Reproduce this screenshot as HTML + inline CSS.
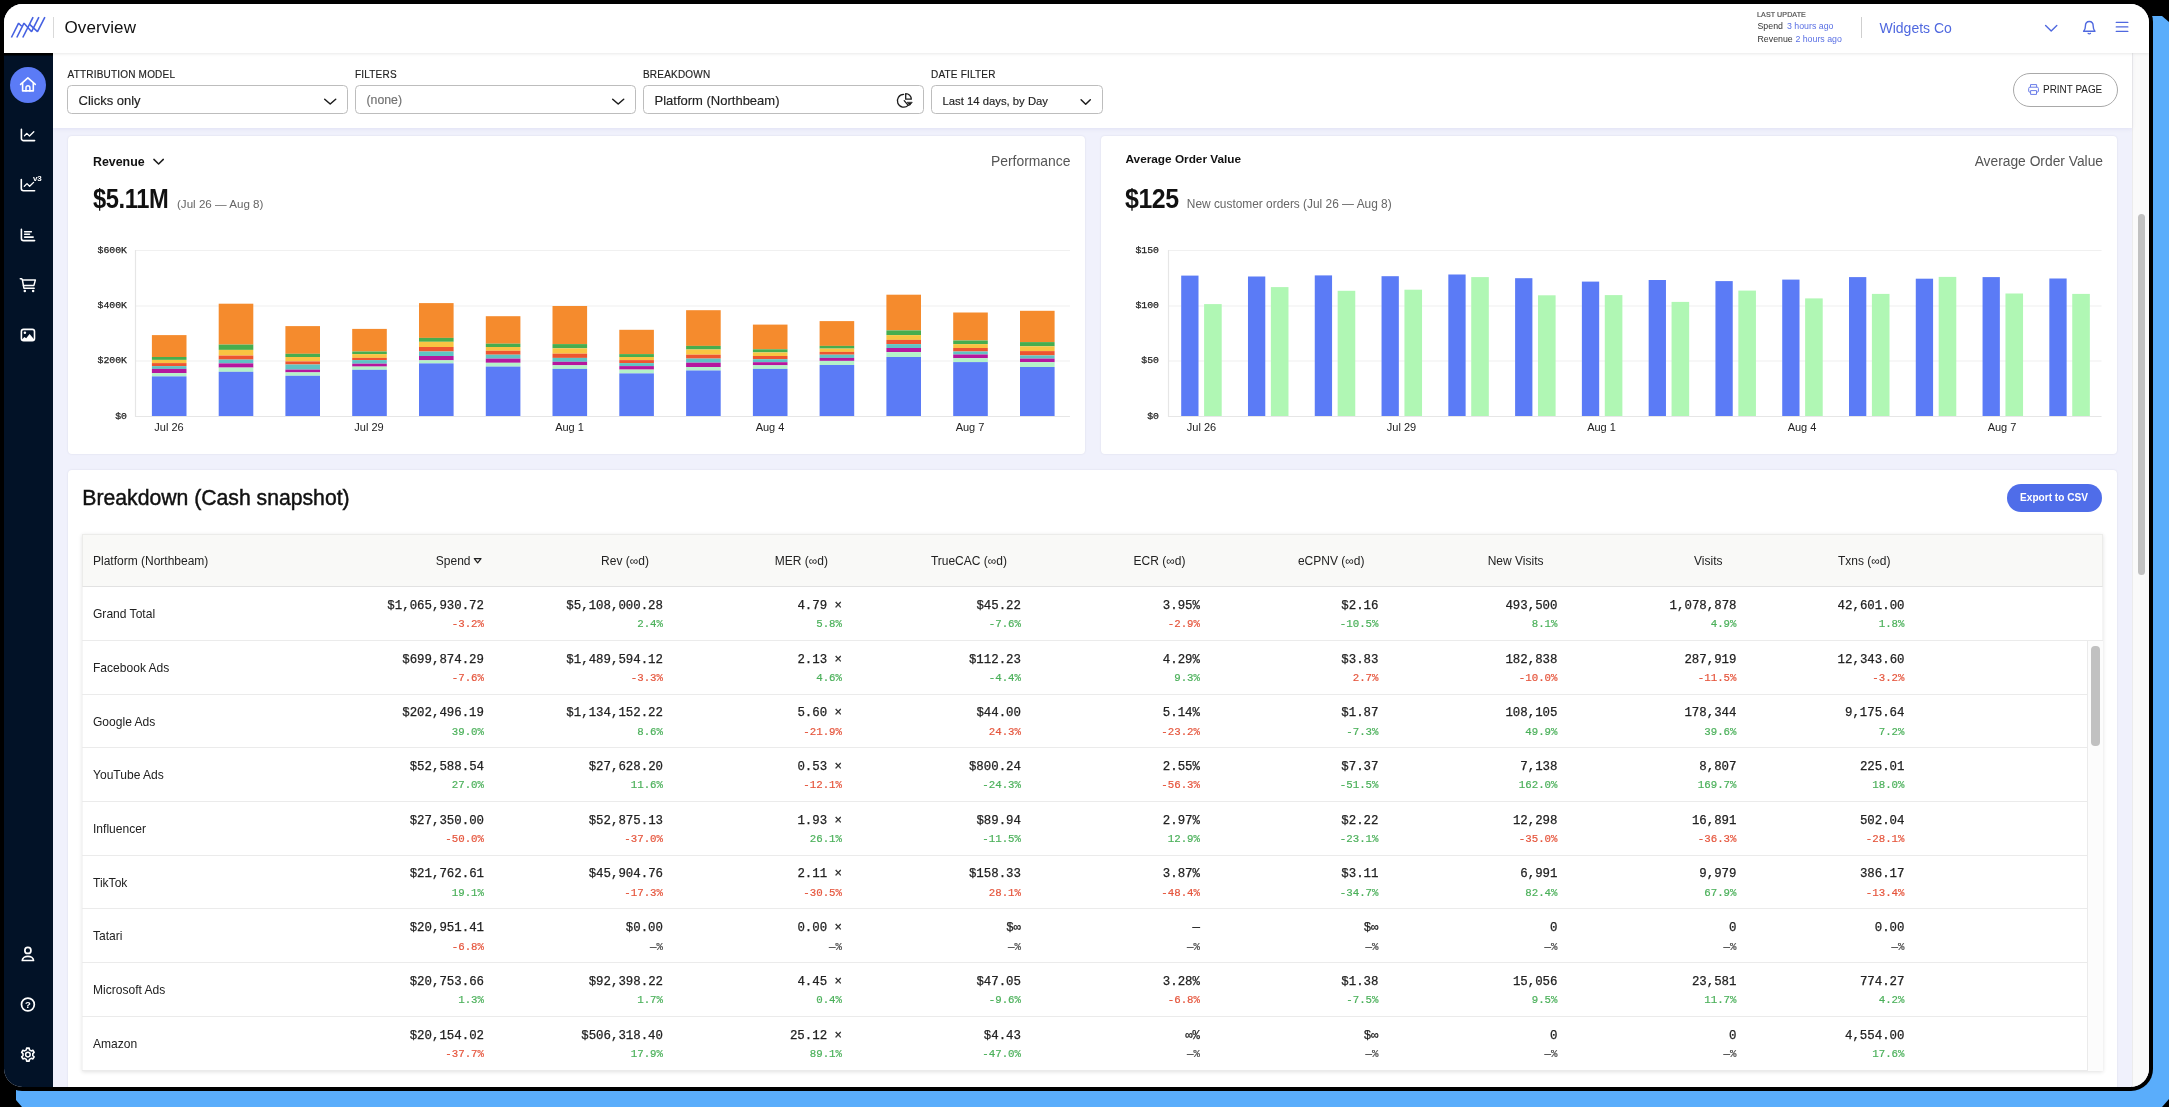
<!DOCTYPE html>
<html>
<head>
<meta charset="utf-8">
<title>Overview</title>
<style>
*{box-sizing:border-box;margin:0;padding:0}
html,body{width:2169px;height:1107px;overflow:hidden;background:#000}
body{font-family:"Liberation Sans",sans-serif;color:#1d1d1f;position:relative}
.abs{position:absolute}
.blue{position:absolute;left:16px;top:16px;width:2153px;height:1091px;background:#5aadfb;clip-path:polygon(0 0,2146px 0,2153px 6px,2153px 1083px,2146px 1091px,6px 1091px,0 1084px)}
.frame{position:absolute;left:0;top:0;width:2152.6px;height:1090.8px;background:#000;border-radius:22px}
.app{position:absolute;left:4px;top:4px;width:2145px;height:1083px;border-radius:18.5px;overflow:hidden;background:#f0f1fc}
.pg{position:absolute;left:-4px;top:-4px;width:2169px;height:1107px;will-change:transform}
.hdr{position:absolute;left:4px;top:4px;width:2145px;height:49px;background:#fff;box-shadow:0 1px 3px rgba(0,0,0,.09);z-index:5}
.side{position:absolute;left:4px;top:53px;width:49px;height:1034px;background:linear-gradient(#000 0,#000 1.5px,#021227 3.5px);z-index:4}
.fbar{position:absolute;left:53px;top:53px;width:2079px;height:75.3px;background:#fff;box-shadow:0 1px 4px rgba(90,90,170,.10)}
.strack{position:absolute;left:2132px;top:53px;width:17px;height:1034px;background:#fafafa;border-left:1px solid #ececec}
.sthumb{position:absolute;left:2137.5px;top:214px;width:7.5px;height:361px;background:#c1c1c1;border-radius:4px}
.card{position:absolute;background:#fff;border-radius:4px;box-shadow:0 0 2px rgba(60,60,90,.12)}
.lbl{position:absolute;top:69.4px;font-size:10px;letter-spacing:.2px;color:#222;-webkit-text-stroke:.15px #222;white-space:nowrap}
.sel{position:absolute;top:85px;height:28.5px;border:1px solid #bdbdbd;border-radius:4.5px;background:#fff;font-size:13px;line-height:29.6px;-webkit-text-stroke:.15px currentColor;padding-left:10.5px;white-space:nowrap;color:#222}
.hr{z-index:7;line-height:10px;white-space:nowrap}
.mono{font-family:"Liberation Mono",monospace}
.ax{position:absolute;font-family:"Liberation Mono",monospace;font-size:9.8px;color:#222;-webkit-text-stroke:.25px #222;text-align:right;width:60px;line-height:12px}
.xl{position:absolute;font-size:11px;color:#222;line-height:14px;top:420px;white-space:nowrap;transform:translateX(-50%)}
.thead{position:absolute;left:82px;top:534px;width:2021px;height:53.3px;background:#f9f9f7;border:1px solid #ececea;border-bottom:1px solid #e2e2e2}
.th{position:absolute;top:553.5px;font-size:12px;line-height:14px;color:#222;white-space:nowrap}
.row{position:absolute;left:0;width:2169px;height:53.69px}

.ln{position:absolute;left:82px;height:1.4px;background:#ebebeb}
.rl{position:absolute;left:93px;top:20px;font-size:12.05px;line-height:14px;color:#222;white-space:nowrap}
.v{position:absolute;top:11.7px;-webkit-text-stroke:.25px #222;font-family:"Liberation Mono",monospace;font-size:12.4px;line-height:14px;color:#222;white-space:nowrap}
.p{position:absolute;top:31.1px;-webkit-text-stroke:.2px currentColor;font-family:"Liberation Mono",monospace;font-size:10.75px;line-height:12px;white-space:nowrap}
.g{color:#4bb05a}.r{color:#e5553c}.n{color:#444}
</style>
</head>
<body>
<div class="blue"></div>
<div class="frame"></div>
<div class="app"><div class="pg">

<!-- scroll track -->
<div class="strack"></div><div class="sthumb"></div>

<!-- filter bar -->
<div class="fbar"></div>
<div class="lbl" style="left:67.5px">ATTRIBUTION MODEL</div>
<div class="lbl" style="left:355px">FILTERS</div>
<div class="lbl" style="left:643px">BREAKDOWN</div>
<div class="lbl" style="left:931px">DATE FILTER</div>
<div class="sel" style="left:67px;width:281px">Clicks only</div>
<div class="sel" style="left:355px;width:281px;color:#717171;font-size:12.3px">(none)</div>
<div class="sel" style="left:643px;width:281px">Platform (Northbeam)</div>
<div class="sel" style="left:931px;width:172px;font-size:11.3px;line-height:30.6px">Last 14 days, by Day</div>

<!-- cards -->
<div class="card" style="left:68px;top:135.5px;width:1016.7px;height:318px"></div>
<div class="card" style="left:1100.5px;top:135.5px;width:1016.5px;height:318px"></div>
<div class="card" style="left:68px;top:470px;width:2049px;height:640px"></div>

<!-- left card text -->
<div class="abs" style="left:93px;top:154.6px;font-size:12.4px;font-weight:bold;line-height:14px;color:#111">Revenue</div>
<div class="abs" style="left:93px;top:184.1px;font-size:28px;font-weight:bold;line-height:30px;color:#111;letter-spacing:-.5px;transform:scaleX(.847);transform-origin:0 0">$5.11M</div>
<div class="abs" style="left:177px;top:197.3px;font-size:11.6px;line-height:14px;color:#666;white-space:nowrap">(Jul 26 — Aug 8)</div>
<div class="abs" style="right:1098.5px;top:153.5px;font-size:13.9px;line-height:15px;color:#555">Performance</div>

<!-- right card text -->
<div class="abs" style="left:1125.5px;top:151.6px;font-size:11.8px;font-weight:bold;line-height:14px;color:#111;white-space:nowrap">Average Order Value</div>
<div class="abs" style="left:1125px;top:184.1px;font-size:28px;font-weight:bold;line-height:30px;color:#111;letter-spacing:-.5px;transform:scaleX(.89);transform-origin:0 0">$125</div>
<div class="abs" style="left:1186.8px;top:197.3px;font-size:11.9px;line-height:14px;color:#666;white-space:nowrap">New customer orders (Jul 26 — Aug 8)</div>
<div class="abs" style="right:66px;top:153.5px;font-size:13.8px;line-height:15px;color:#555">Average Order Value</div>

<!-- axis labels left -->
<div class="ax" style="left:67px;top:245px">$600K</div>
<div class="ax" style="left:67px;top:300px">$400K</div>
<div class="ax" style="left:67px;top:355px">$200K</div>
<div class="ax" style="left:67px;top:411px">$0</div>
<div class="ax" style="left:1099px;top:245px">$150</div>
<div class="ax" style="left:1099px;top:300px">$100</div>
<div class="ax" style="left:1099px;top:355px">$50</div>
<div class="ax" style="left:1099px;top:411px">$0</div>

<div class="xl" style="left:169px">Jul 26</div>
<div class="xl" style="left:369px">Jul 29</div>
<div class="xl" style="left:569.5px">Aug 1</div>
<div class="xl" style="left:770px">Aug 4</div>
<div class="xl" style="left:970px">Aug 7</div>
<div class="xl" style="left:1201.5px">Jul 26</div>
<div class="xl" style="left:1401.5px">Jul 29</div>
<div class="xl" style="left:1601.5px">Aug 1</div>
<div class="xl" style="left:1802px">Aug 4</div>
<div class="xl" style="left:2002px">Aug 7</div>

<!-- charts -->
<svg class="abs" style="left:0;top:0" width="2169" height="1107" viewBox="0 0 2169 1107" shape-rendering="auto">
<g stroke="#f0f0f0" stroke-width="1.2" fill="none">
<path d="M135.5 250.5H1070 M135.5 306H1070 M135.5 361H1070"/>
<path d="M1168.5 250.5H2101.5 M1168.5 306H2101.5 M1168.5 361H2101.5"/>
</g>
<g stroke="#e6e6e6" stroke-width="1.2" fill="none">
<path d="M135.5 250V416.5H1070"/>
<path d="M1168.5 250V416.5H2101.5"/>
</g>
<rect x="151.9" y="335.1" width="34.6" height="21.9" fill="#f58b2d"/>
<rect x="151.9" y="357" width="34.6" height="2.9" fill="#47ad4e"/>
<rect x="151.9" y="359.9" width="34.6" height="3.2" fill="#f9c442"/>
<rect x="151.9" y="363.1" width="34.6" height="3" fill="#ed5530"/>
<rect x="151.9" y="366.1" width="34.6" height="2.8" fill="#5fc3c4"/>
<rect x="151.9" y="368.9" width="34.6" height="4.3" fill="#b5179e"/>
<rect x="151.9" y="373.2" width="34.6" height="3.2" fill="#b4f2c8"/>
<rect x="151.9" y="376.4" width="34.6" height="39.6" fill="#5b7bf6"/>
<rect x="218.7" y="303.7" width="34.6" height="40.9" fill="#f58b2d"/>
<rect x="218.7" y="344.6" width="34.6" height="5.3" fill="#47ad4e"/>
<rect x="218.7" y="349.9" width="34.6" height="5.7" fill="#f9c442"/>
<rect x="218.7" y="355.6" width="34.6" height="4" fill="#ed5530"/>
<rect x="218.7" y="359.6" width="34.6" height="3.8" fill="#5fc3c4"/>
<rect x="218.7" y="363.4" width="34.6" height="4.2" fill="#b5179e"/>
<rect x="218.7" y="367.6" width="34.6" height="4.2" fill="#b4f2c8"/>
<rect x="218.7" y="371.8" width="34.6" height="44.2" fill="#5b7bf6"/>
<rect x="285.4" y="326.1" width="34.6" height="27.7" fill="#f58b2d"/>
<rect x="285.4" y="353.8" width="34.6" height="3.2" fill="#47ad4e"/>
<rect x="285.4" y="357" width="34.6" height="4.4" fill="#f9c442"/>
<rect x="285.4" y="361.4" width="34.6" height="3.1" fill="#ed5530"/>
<rect x="285.4" y="364.5" width="34.6" height="5.1" fill="#5fc3c4"/>
<rect x="285.4" y="369.6" width="34.6" height="2.8" fill="#b5179e"/>
<rect x="285.4" y="372.4" width="34.6" height="3.4" fill="#b4f2c8"/>
<rect x="285.4" y="375.8" width="34.6" height="40.2" fill="#5b7bf6"/>
<rect x="352.2" y="328.9" width="34.6" height="22.6" fill="#f58b2d"/>
<rect x="352.2" y="351.5" width="34.6" height="2.6" fill="#47ad4e"/>
<rect x="352.2" y="354.1" width="34.6" height="3.8" fill="#f9c442"/>
<rect x="352.2" y="357.9" width="34.6" height="2.2" fill="#ed5530"/>
<rect x="352.2" y="360.1" width="34.6" height="3.6" fill="#5fc3c4"/>
<rect x="352.2" y="363.7" width="34.6" height="2.9" fill="#b5179e"/>
<rect x="352.2" y="366.6" width="34.6" height="3.2" fill="#b4f2c8"/>
<rect x="352.2" y="369.8" width="34.6" height="46.2" fill="#5b7bf6"/>
<rect x="419" y="303.1" width="34.6" height="34.8" fill="#f58b2d"/>
<rect x="419" y="337.9" width="34.6" height="3.9" fill="#47ad4e"/>
<rect x="419" y="341.8" width="34.6" height="5.2" fill="#f9c442"/>
<rect x="419" y="347" width="34.6" height="4.5" fill="#ed5530"/>
<rect x="419" y="351.5" width="34.6" height="4.5" fill="#5fc3c4"/>
<rect x="419" y="356" width="34.6" height="4.3" fill="#b5179e"/>
<rect x="419" y="360.3" width="34.6" height="3.1" fill="#b4f2c8"/>
<rect x="419" y="363.4" width="34.6" height="52.6" fill="#5b7bf6"/>
<rect x="485.8" y="316.2" width="34.6" height="27.5" fill="#f58b2d"/>
<rect x="485.8" y="343.7" width="34.6" height="3.3" fill="#47ad4e"/>
<rect x="485.8" y="347" width="34.6" height="3.8" fill="#f9c442"/>
<rect x="485.8" y="350.8" width="34.6" height="3.9" fill="#ed5530"/>
<rect x="485.8" y="354.7" width="34.6" height="3.9" fill="#5fc3c4"/>
<rect x="485.8" y="358.6" width="34.6" height="4.2" fill="#b5179e"/>
<rect x="485.8" y="362.8" width="34.6" height="3.8" fill="#b4f2c8"/>
<rect x="485.8" y="366.6" width="34.6" height="49.4" fill="#5b7bf6"/>
<rect x="552.5" y="306" width="34.6" height="38.1" fill="#f58b2d"/>
<rect x="552.5" y="344.1" width="34.6" height="4.2" fill="#47ad4e"/>
<rect x="552.5" y="348.3" width="34.6" height="5.4" fill="#f9c442"/>
<rect x="552.5" y="353.7" width="34.6" height="4.2" fill="#ed5530"/>
<rect x="552.5" y="357.9" width="34.6" height="3.9" fill="#5fc3c4"/>
<rect x="552.5" y="361.8" width="34.6" height="3.5" fill="#b5179e"/>
<rect x="552.5" y="365.3" width="34.6" height="3.6" fill="#b4f2c8"/>
<rect x="552.5" y="368.9" width="34.6" height="47.1" fill="#5b7bf6"/>
<rect x="619.3" y="329.8" width="34.6" height="24.3" fill="#f58b2d"/>
<rect x="619.3" y="354.1" width="34.6" height="2.9" fill="#47ad4e"/>
<rect x="619.3" y="357" width="34.6" height="3.1" fill="#f9c442"/>
<rect x="619.3" y="360.1" width="34.6" height="3" fill="#ed5530"/>
<rect x="619.3" y="363.1" width="34.6" height="3" fill="#5fc3c4"/>
<rect x="619.3" y="366.1" width="34.6" height="3.5" fill="#b5179e"/>
<rect x="619.3" y="369.6" width="34.6" height="3.8" fill="#b4f2c8"/>
<rect x="619.3" y="373.4" width="34.6" height="42.6" fill="#5b7bf6"/>
<rect x="686.1" y="310.2" width="34.6" height="35.7" fill="#f58b2d"/>
<rect x="686.1" y="345.9" width="34.6" height="3.6" fill="#47ad4e"/>
<rect x="686.1" y="349.5" width="34.6" height="5.2" fill="#f9c442"/>
<rect x="686.1" y="354.7" width="34.6" height="3.9" fill="#ed5530"/>
<rect x="686.1" y="358.6" width="34.6" height="4.1" fill="#5fc3c4"/>
<rect x="686.1" y="362.7" width="34.6" height="4.3" fill="#b5179e"/>
<rect x="686.1" y="367" width="34.6" height="3.5" fill="#b4f2c8"/>
<rect x="686.1" y="370.5" width="34.6" height="45.5" fill="#5b7bf6"/>
<rect x="752.9" y="324.6" width="34.6" height="24.7" fill="#f58b2d"/>
<rect x="752.9" y="349.3" width="34.6" height="3.1" fill="#47ad4e"/>
<rect x="752.9" y="352.4" width="34.6" height="3.6" fill="#f9c442"/>
<rect x="752.9" y="356" width="34.6" height="3.2" fill="#ed5530"/>
<rect x="752.9" y="359.2" width="34.6" height="3" fill="#5fc3c4"/>
<rect x="752.9" y="362.2" width="34.6" height="3.1" fill="#b5179e"/>
<rect x="752.9" y="365.3" width="34.6" height="3.6" fill="#b4f2c8"/>
<rect x="752.9" y="368.9" width="34.6" height="47.1" fill="#5b7bf6"/>
<rect x="819.6" y="321.1" width="34.6" height="24.8" fill="#f58b2d"/>
<rect x="819.6" y="345.9" width="34.6" height="2.7" fill="#47ad4e"/>
<rect x="819.6" y="348.6" width="34.6" height="3.3" fill="#f9c442"/>
<rect x="819.6" y="351.9" width="34.6" height="2.8" fill="#ed5530"/>
<rect x="819.6" y="354.7" width="34.6" height="3.2" fill="#5fc3c4"/>
<rect x="819.6" y="357.9" width="34.6" height="3" fill="#b5179e"/>
<rect x="819.6" y="360.9" width="34.6" height="4.1" fill="#b4f2c8"/>
<rect x="819.6" y="365" width="34.6" height="51" fill="#5b7bf6"/>
<rect x="886.4" y="294.7" width="34.6" height="35.7" fill="#f58b2d"/>
<rect x="886.4" y="330.4" width="34.6" height="4.7" fill="#47ad4e"/>
<rect x="886.4" y="335.1" width="34.6" height="4.8" fill="#f9c442"/>
<rect x="886.4" y="339.9" width="34.6" height="4.2" fill="#ed5530"/>
<rect x="886.4" y="344.1" width="34.6" height="3.9" fill="#5fc3c4"/>
<rect x="886.4" y="348" width="34.6" height="4.1" fill="#b5179e"/>
<rect x="886.4" y="352.1" width="34.6" height="4.9" fill="#b4f2c8"/>
<rect x="886.4" y="357" width="34.6" height="59" fill="#5b7bf6"/>
<rect x="953.2" y="312.5" width="34.6" height="28" fill="#f58b2d"/>
<rect x="953.2" y="340.5" width="34.6" height="3.6" fill="#47ad4e"/>
<rect x="953.2" y="344.1" width="34.6" height="3.9" fill="#f9c442"/>
<rect x="953.2" y="348" width="34.6" height="3.5" fill="#ed5530"/>
<rect x="953.2" y="351.5" width="34.6" height="3" fill="#5fc3c4"/>
<rect x="953.2" y="354.5" width="34.6" height="3.7" fill="#b5179e"/>
<rect x="953.2" y="358.2" width="34.6" height="3.9" fill="#b4f2c8"/>
<rect x="953.2" y="362.1" width="34.6" height="53.9" fill="#5b7bf6"/>
<rect x="1020" y="310.8" width="34.6" height="31.3" fill="#f58b2d"/>
<rect x="1020" y="342.1" width="34.6" height="4.2" fill="#47ad4e"/>
<rect x="1020" y="346.3" width="34.6" height="4.8" fill="#f9c442"/>
<rect x="1020" y="351.1" width="34.6" height="4.3" fill="#ed5530"/>
<rect x="1020" y="355.4" width="34.6" height="3.2" fill="#5fc3c4"/>
<rect x="1020" y="358.6" width="34.6" height="3.6" fill="#b5179e"/>
<rect x="1020" y="362.2" width="34.6" height="4.8" fill="#b4f2c8"/>
<rect x="1020" y="367" width="34.6" height="49" fill="#5b7bf6"/>
<rect x="1181.2" y="275.6" width="17.3" height="140.4" fill="#5b7bf6"/>
<rect x="1204.1" y="304.1" width="17.6" height="111.9" fill="#b0f7b4"/>
<rect x="1247.98" y="276.5" width="17.3" height="139.5" fill="#5b7bf6"/>
<rect x="1270.88" y="287.1" width="17.6" height="128.9" fill="#b0f7b4"/>
<rect x="1314.76" y="275.4" width="17.3" height="140.6" fill="#5b7bf6"/>
<rect x="1337.66" y="290.8" width="17.6" height="125.2" fill="#b0f7b4"/>
<rect x="1381.54" y="276.2" width="17.3" height="139.8" fill="#5b7bf6"/>
<rect x="1404.44" y="289.7" width="17.6" height="126.3" fill="#b0f7b4"/>
<rect x="1448.32" y="274.5" width="17.3" height="141.5" fill="#5b7bf6"/>
<rect x="1471.22" y="277.1" width="17.6" height="138.9" fill="#b0f7b4"/>
<rect x="1515.1" y="278.2" width="17.3" height="137.8" fill="#5b7bf6"/>
<rect x="1538" y="295.3" width="17.6" height="120.7" fill="#b0f7b4"/>
<rect x="1581.88" y="281.6" width="17.3" height="134.4" fill="#5b7bf6"/>
<rect x="1604.78" y="295.1" width="17.6" height="120.9" fill="#b0f7b4"/>
<rect x="1648.66" y="280" width="17.3" height="136" fill="#5b7bf6"/>
<rect x="1671.56" y="301.9" width="17.6" height="114.1" fill="#b0f7b4"/>
<rect x="1715.44" y="281.1" width="17.3" height="134.9" fill="#5b7bf6"/>
<rect x="1738.34" y="290.6" width="17.6" height="125.4" fill="#b0f7b4"/>
<rect x="1782.22" y="279.6" width="17.3" height="136.4" fill="#5b7bf6"/>
<rect x="1805.12" y="298.4" width="17.6" height="117.6" fill="#b0f7b4"/>
<rect x="1849" y="277.1" width="17.3" height="138.9" fill="#5b7bf6"/>
<rect x="1871.9" y="293.9" width="17.6" height="122.1" fill="#b0f7b4"/>
<rect x="1915.78" y="278.7" width="17.3" height="137.3" fill="#5b7bf6"/>
<rect x="1938.68" y="276.9" width="17.6" height="139.1" fill="#b0f7b4"/>
<rect x="1982.56" y="277.1" width="17.3" height="138.9" fill="#5b7bf6"/>
<rect x="2005.46" y="293.5" width="17.6" height="122.5" fill="#b0f7b4"/>
<rect x="2049.34" y="278.5" width="17.3" height="137.5" fill="#5b7bf6"/>
<rect x="2072.24" y="293.9" width="17.6" height="122.1" fill="#b0f7b4"/>
</svg>

<!-- breakdown -->
<div class="abs" style="left:82.3px;top:484.6px;font-size:21.2px;line-height:26px;color:#111;white-space:nowrap;-webkit-text-stroke:.45px #111">Breakdown (Cash snapshot)</div>
<div class="abs" style="left:2006.5px;top:484px;width:95px;height:28px;border-radius:14px;background:#4f6de9;color:#fff;font-size:10.1px;font-weight:bold;line-height:28px;text-align:center">Export to CSV</div>

<div class="abs" style="left:82px;top:534px;width:2021px;height:537px;border:1px solid #f5f5f5;box-shadow:0 1px 4px rgba(0,0,0,.12)"></div>
<div class="thead"></div>
<div class="th" style="left:93px">Platform (Northbeam)</div>
<div class="th" style="right:1698.5px">Spend</div>
<div class="th" style="right:1520px">Rev (∞d)</div>
<div class="th" style="right:1341px">MER (∞d)</div>
<div class="th" style="right:1162px">TrueCAC (∞d)</div>
<div class="th" style="right:983.5px">ECR (∞d)</div>
<div class="th" style="right:804.5px">eCPNV (∞d)</div>
<div class="th" style="right:625.5px">New Visits</div>
<div class="th" style="right:446.5px">Visits</div>
<div class="th" style="right:278.5px">Txns (∞d)</div>
<div class="row" style="top:587.3px">
<div class="rl">Grand Total</div>
<div class="v" style="right:1685px">$1,065,930.72</div><div class="p r" style="right:1685px">-3.2%</div>
<div class="v" style="right:1506px">$5,108,000.28</div><div class="p g" style="right:1506px">2.4%</div>
<div class="v" style="right:1327px">4.79 ×</div><div class="p g" style="right:1327px">5.8%</div>
<div class="v" style="right:1148px">$45.22</div><div class="p g" style="right:1148px">-7.6%</div>
<div class="v" style="right:969px">3.95%</div><div class="p r" style="right:969px">-2.9%</div>
<div class="v" style="right:790.5px">$2.16</div><div class="p g" style="right:790.5px">-10.5%</div>
<div class="v" style="right:611.5px">493,500</div><div class="p g" style="right:611.5px">8.1%</div>
<div class="v" style="right:432.5px">1,078,878</div><div class="p g" style="right:432.5px">4.9%</div>
<div class="v" style="right:264.5px">42,601.00</div><div class="p g" style="right:264.5px">1.8%</div>
</div>
<div class="row" style="top:640.99px">
<div class="rl">Facebook Ads</div>
<div class="v" style="right:1685px">$699,874.29</div><div class="p r" style="right:1685px">-7.6%</div>
<div class="v" style="right:1506px">$1,489,594.12</div><div class="p r" style="right:1506px">-3.3%</div>
<div class="v" style="right:1327px">2.13 ×</div><div class="p g" style="right:1327px">4.6%</div>
<div class="v" style="right:1148px">$112.23</div><div class="p g" style="right:1148px">-4.4%</div>
<div class="v" style="right:969px">4.29%</div><div class="p g" style="right:969px">9.3%</div>
<div class="v" style="right:790.5px">$3.83</div><div class="p r" style="right:790.5px">2.7%</div>
<div class="v" style="right:611.5px">182,838</div><div class="p r" style="right:611.5px">-10.0%</div>
<div class="v" style="right:432.5px">287,919</div><div class="p r" style="right:432.5px">-11.5%</div>
<div class="v" style="right:264.5px">12,343.60</div><div class="p r" style="right:264.5px">-3.2%</div>
</div>
<div class="row" style="top:694.68px">
<div class="rl">Google Ads</div>
<div class="v" style="right:1685px">$202,496.19</div><div class="p g" style="right:1685px">39.0%</div>
<div class="v" style="right:1506px">$1,134,152.22</div><div class="p g" style="right:1506px">8.6%</div>
<div class="v" style="right:1327px">5.60 ×</div><div class="p r" style="right:1327px">-21.9%</div>
<div class="v" style="right:1148px">$44.00</div><div class="p r" style="right:1148px">24.3%</div>
<div class="v" style="right:969px">5.14%</div><div class="p r" style="right:969px">-23.2%</div>
<div class="v" style="right:790.5px">$1.87</div><div class="p g" style="right:790.5px">-7.3%</div>
<div class="v" style="right:611.5px">108,105</div><div class="p g" style="right:611.5px">49.9%</div>
<div class="v" style="right:432.5px">178,344</div><div class="p g" style="right:432.5px">39.6%</div>
<div class="v" style="right:264.5px">9,175.64</div><div class="p g" style="right:264.5px">7.2%</div>
</div>
<div class="row" style="top:748.37px">
<div class="rl">YouTube Ads</div>
<div class="v" style="right:1685px">$52,588.54</div><div class="p g" style="right:1685px">27.0%</div>
<div class="v" style="right:1506px">$27,628.20</div><div class="p g" style="right:1506px">11.6%</div>
<div class="v" style="right:1327px">0.53 ×</div><div class="p r" style="right:1327px">-12.1%</div>
<div class="v" style="right:1148px">$800.24</div><div class="p g" style="right:1148px">-24.3%</div>
<div class="v" style="right:969px">2.55%</div><div class="p r" style="right:969px">-56.3%</div>
<div class="v" style="right:790.5px">$7.37</div><div class="p g" style="right:790.5px">-51.5%</div>
<div class="v" style="right:611.5px">7,138</div><div class="p g" style="right:611.5px">162.0%</div>
<div class="v" style="right:432.5px">8,807</div><div class="p g" style="right:432.5px">169.7%</div>
<div class="v" style="right:264.5px">225.01</div><div class="p g" style="right:264.5px">18.0%</div>
</div>
<div class="row" style="top:802.06px">
<div class="rl">Influencer</div>
<div class="v" style="right:1685px">$27,350.00</div><div class="p r" style="right:1685px">-50.0%</div>
<div class="v" style="right:1506px">$52,875.13</div><div class="p r" style="right:1506px">-37.0%</div>
<div class="v" style="right:1327px">1.93 ×</div><div class="p g" style="right:1327px">26.1%</div>
<div class="v" style="right:1148px">$89.94</div><div class="p g" style="right:1148px">-11.5%</div>
<div class="v" style="right:969px">2.97%</div><div class="p g" style="right:969px">12.9%</div>
<div class="v" style="right:790.5px">$2.22</div><div class="p g" style="right:790.5px">-23.1%</div>
<div class="v" style="right:611.5px">12,298</div><div class="p r" style="right:611.5px">-35.0%</div>
<div class="v" style="right:432.5px">16,891</div><div class="p r" style="right:432.5px">-36.3%</div>
<div class="v" style="right:264.5px">502.04</div><div class="p r" style="right:264.5px">-28.1%</div>
</div>
<div class="row" style="top:855.75px">
<div class="rl">TikTok</div>
<div class="v" style="right:1685px">$21,762.61</div><div class="p g" style="right:1685px">19.1%</div>
<div class="v" style="right:1506px">$45,904.76</div><div class="p r" style="right:1506px">-17.3%</div>
<div class="v" style="right:1327px">2.11 ×</div><div class="p r" style="right:1327px">-30.5%</div>
<div class="v" style="right:1148px">$158.33</div><div class="p r" style="right:1148px">28.1%</div>
<div class="v" style="right:969px">3.87%</div><div class="p r" style="right:969px">-48.4%</div>
<div class="v" style="right:790.5px">$3.11</div><div class="p g" style="right:790.5px">-34.7%</div>
<div class="v" style="right:611.5px">6,991</div><div class="p g" style="right:611.5px">82.4%</div>
<div class="v" style="right:432.5px">9,979</div><div class="p g" style="right:432.5px">67.9%</div>
<div class="v" style="right:264.5px">386.17</div><div class="p r" style="right:264.5px">-13.4%</div>
</div>
<div class="row" style="top:909.44px">
<div class="rl">Tatari</div>
<div class="v" style="right:1685px">$20,951.41</div><div class="p r" style="right:1685px">-6.8%</div>
<div class="v" style="right:1506px">$0.00</div><div class="p n" style="right:1506px">—%</div>
<div class="v" style="right:1327px">0.00 ×</div><div class="p n" style="right:1327px">—%</div>
<div class="v" style="right:1148px">$∞</div><div class="p n" style="right:1148px">—%</div>
<div class="v" style="right:969px">—</div><div class="p n" style="right:969px">—%</div>
<div class="v" style="right:790.5px">$∞</div><div class="p n" style="right:790.5px">—%</div>
<div class="v" style="right:611.5px">0</div><div class="p n" style="right:611.5px">—%</div>
<div class="v" style="right:432.5px">0</div><div class="p n" style="right:432.5px">—%</div>
<div class="v" style="right:264.5px">0.00</div><div class="p n" style="right:264.5px">—%</div>
</div>
<div class="row" style="top:963.13px">
<div class="rl">Microsoft Ads</div>
<div class="v" style="right:1685px">$20,753.66</div><div class="p g" style="right:1685px">1.3%</div>
<div class="v" style="right:1506px">$92,398.22</div><div class="p g" style="right:1506px">1.7%</div>
<div class="v" style="right:1327px">4.45 ×</div><div class="p g" style="right:1327px">0.4%</div>
<div class="v" style="right:1148px">$47.05</div><div class="p g" style="right:1148px">-9.6%</div>
<div class="v" style="right:969px">3.28%</div><div class="p r" style="right:969px">-6.8%</div>
<div class="v" style="right:790.5px">$1.38</div><div class="p g" style="right:790.5px">-7.5%</div>
<div class="v" style="right:611.5px">15,056</div><div class="p g" style="right:611.5px">9.5%</div>
<div class="v" style="right:432.5px">23,581</div><div class="p g" style="right:432.5px">11.7%</div>
<div class="v" style="right:264.5px">774.27</div><div class="p g" style="right:264.5px">4.2%</div>
</div>
<div class="row" style="top:1016.82px">
<div class="rl">Amazon</div>
<div class="v" style="right:1685px">$20,154.02</div><div class="p r" style="right:1685px">-37.7%</div>
<div class="v" style="right:1506px">$506,318.40</div><div class="p g" style="right:1506px">17.9%</div>
<div class="v" style="right:1327px">25.12 ×</div><div class="p g" style="right:1327px">89.1%</div>
<div class="v" style="right:1148px">$4.43</div><div class="p g" style="right:1148px">-47.0%</div>
<div class="v" style="right:969px">∞%</div><div class="p n" style="right:969px">—%</div>
<div class="v" style="right:790.5px">$∞</div><div class="p n" style="right:790.5px">—%</div>
<div class="v" style="right:611.5px">0</div><div class="p n" style="right:611.5px">—%</div>
<div class="v" style="right:432.5px">0</div><div class="p n" style="right:432.5px">—%</div>
<div class="v" style="right:264.5px">4,554.00</div><div class="p g" style="right:264.5px">17.6%</div>
</div>
<div class="ln" style="top:640px;width:2021px"></div>
<div class="ln" style="top:694px;width:2006px"></div>
<div class="ln" style="top:747px;width:2006px"></div>
<div class="ln" style="top:801px;width:2006px"></div>
<div class="ln" style="top:855px;width:2006px"></div>
<div class="ln" style="top:908px;width:2006px"></div>
<div class="ln" style="top:962px;width:2006px"></div>
<div class="ln" style="top:1016px;width:2006px"></div>
<div class="ln" style="top:1070px;width:2021px"></div>

<!-- inner scrollbar -->
<div class="abs" style="left:2087px;top:641px;width:16px;height:430px;background:#fcfcfc;border-left:1px solid #ebebeb"></div>
<div class="abs" style="left:2091px;top:645.5px;width:8.5px;height:100px;background:#c1c1c1;border-radius:4px"></div>

<!-- sidebar -->
<div class="side"></div>
<div class="abs" style="left:10px;top:67px;width:36px;height:36px;border-radius:18px;background:#5b7bf6;z-index:6"></div>

<!-- header -->
<div class="hdr"></div>
<div class="abs" style="left:53px;top:17px;width:1px;height:21px;background:#d9d9d9;z-index:7"></div>
<div class="abs" style="left:64.5px;top:18.2px;font-size:17px;line-height:20px;color:#111;z-index:7;letter-spacing:.08px">Overview</div>

<!-- icon overlay -->
<svg class="abs" style="left:0;top:0;z-index:10" width="2169" height="1107" viewBox="0 0 2169 1107" fill="none">
<!-- logo -->
<g stroke="#4762e2" stroke-width="1.6" stroke-linecap="butt" stroke-linejoin="bevel">
<path d="M11.4 37.5L18.6 23.2L21.7 26.3"/>
<path d="M16.8 37.5L24 23.2L31.6 31.7L38.9 17.1"/>
<path d="M22.8 37.5L33.1 17.1"/>
<path d="M29.6 24.4L37.5 31.7L44.9 17.1"/>
</g>
<!-- header right -->
<g stroke="#4f68df" stroke-width="1.4" stroke-linecap="round" stroke-linejoin="round">
<path d="M2045.6 25.6L2051.2 31L2056.8 25.6"/>
<path d="M2116.3 22.4H2127.8M2116.3 26.9H2127.8M2116.3 31.4H2127.8"/>
<path d="M2083.6 31.3H2095 C2093.6 30 2093.2 28.6 2093.2 26.3 C2093.2 23.3 2091.6 21.5 2089.3 21.5 C2087 21.5 2085.4 23.3 2085.4 26.3 C2085.4 28.6 2085 30 2083.6 31.3Z"/>
<path d="M2088.2 33.4C2088.7 34 2089.9 34 2090.4 33.4"/>
</g>
<!-- select chevrons -->
<g stroke="#1c1c1c" stroke-width="1.5" stroke-linecap="round" stroke-linejoin="round">
<path d="M324.7 99.2L330.2 104L335.7 99.2"/>
<path d="M612.7 99.2L618.2 104L623.7 99.2"/>
<path d="M1081.1 99.7L1085.7 104.2L1090.3 99.7"/>
<path d="M153.9 159.4L158.6 164L163.3 159.4"/>
</g>
<!-- breakdown pie icon -->
<g stroke="#1c1c1c" stroke-width="1.3" stroke-linecap="round" stroke-linejoin="round">
<path d="M903.6 94.4A6.4 6.4 0 1 0 908.2 105.4"/>
<path d="M904.2 100.7L908.2 105.4"/>
<path d="M905.7 93.6V99.2H911.3A5.6 5.6 0 0 0 905.7 93.6Z"/>
<path d="M907.4 102.6L909.7 105.4L912 102.6Z" fill="#1c1c1c" stroke-width=".8"/>
</g>
<!-- print icon -->
<g stroke="#6a7de8" stroke-width="1" stroke-linejoin="round">
<path d="M2030.5 87.2V84.6H2036.6V87.2"/>
<rect x="2028.7" y="87.2" width="9.7" height="5" rx="1.2"/>
<rect x="2030.6" y="90.6" width="5.9" height="3.8" fill="#fff"/>
</g>
<!-- sort icon -->
<path d="M474.3 558.7H481L477.65 562.9Z" stroke="#222" stroke-width="1.25" stroke-linejoin="round"/>
<!-- sidebar icons -->
<g stroke="#fff" stroke-width="1.6" stroke-linecap="round" stroke-linejoin="round">
<!-- home -->
<path d="M20.6 84.4L27.9 77.9L35.3 84.4"/>
<path d="M22.6 83.4V90.9H33.3V83.4"/>
<path d="M26 90.9V87.7A1.95 1.95 0 0 1 29.9 87.7V90.9" stroke-width="1.5"/>
<!-- line chart -->
<path d="M21.4 129.4V138.4A2.2 2.2 0 0 0 23.6 140.6H34.6"/>
<path d="M24.5 135.7L26.8 133.4L29.5 136L33.8 131.8" stroke-width="1.3"/>
<!-- v3 chart -->
<path d="M21.3 179.6V188.6A2.2 2.2 0 0 0 23.5 190.8H34.6"/>
<path d="M24.3 186.2L27 183.6L29.6 186.3L33.6 182.4" stroke-width="1.3"/>
<!-- bar chart -->
<path d="M21.4 229.4V238.4A2.2 2.2 0 0 0 23.6 240.6H34.6"/>
<path d="M24.6 231.7H31.4M24.6 234.3H29.6" stroke-width="1.4"/>
<path d="M24.8 237.1H33" stroke-width="1.9"/>
<!-- cart -->
<path d="M20.3 278.7H21.6L22.4 279.8L23.9 288.2H34.2" stroke-width="1.5"/>
<path d="M22.6 279.9H35.4L33.9 285.4H23.5" stroke-width="1.5"/>
<!-- image -->
<rect x="21.4" y="329.4" width="13.1" height="11.2" rx="2.2" stroke-width="1.6"/>
<!-- user -->
<circle cx="27.9" cy="950.4" r="3.05" stroke-width="1.7"/>
<path d="M22.3 960.5C22.3 954.9 33.5 954.9 33.5 960.5Z" stroke-width="1.7"/>
<!-- help -->
<circle cx="27.9" cy="1004.5" r="6.4" stroke-width="1.7"/>
<!-- gear -->
<path d="M32.79 1053.56 L34.14 1052.45 L32.88 1050.27 L31.25 1050.88 L29.45 1049.84 L29.16 1048.12 L26.64 1048.12 L26.35 1049.84 L24.55 1050.88 L22.92 1050.27 L21.66 1052.45 L23.01 1053.56 L23.01 1055.64 L21.66 1056.75 L22.92 1058.93 L24.55 1058.32 L26.35 1059.36 L26.64 1061.08 L29.16 1061.08 L29.45 1059.36 L31.25 1058.32 L32.88 1058.93 L34.14 1056.75 L32.79 1055.64Z" stroke-width="1.6"/>
<circle cx="27.9" cy="1054.6" r="2.3" stroke-width="1.5"/>
</g>
<g fill="#fff">
<circle cx="24.8" cy="291.1" r="1.25"/><circle cx="33.1" cy="291.1" r="1.25"/>
<circle cx="24.9" cy="332.7" r="1.25"/>
<path d="M22 339.4L24.4 337.1L26.2 338.3L29.6 334L34 339.2V340H22Z"/>
</g>
</svg>
<div class="abs" style="left:33px;top:173.5px;font-size:8px;font-weight:bold;color:#fff;z-index:11;line-height:9px;letter-spacing:-.3px">v3</div>
<div class="abs" style="left:22.9px;top:999.2px;width:10px;text-align:center;font-size:9.5px;font-weight:bold;color:#fff;z-index:11;line-height:11px">?</div>

<!-- header right text -->
<div class="abs hr" style="left:1757px;top:9.6px;font-size:7.1px;letter-spacing:.1px;color:#555;-webkit-text-stroke:.2px #555">LAST UPDATE</div>
<div class="abs hr" style="left:1757.5px;top:21.3px;font-size:8.8px;color:#333">Spend</div>
<div class="abs hr" style="left:1787px;top:21.3px;font-size:8.8px;color:#5a70e4">3 hours ago</div>
<div class="abs hr" style="left:1757.5px;top:33.6px;font-size:8.8px;color:#333">Revenue</div>
<div class="abs hr" style="left:1795.4px;top:33.6px;font-size:8.8px;color:#5a70e4">2 hours ago</div>
<div class="abs" style="left:1860.5px;top:17px;width:1px;height:20.5px;background:#cfcfcf;z-index:7"></div>
<div class="abs hr" style="left:1879.5px;top:19.5px;font-size:14px;line-height:16px;color:#4f68df;letter-spacing:0">Widgets Co</div>

<!-- print page -->
<div class="abs" style="left:2012.8px;top:73.3px;width:105px;height:33.6px;border:1px solid #a9a9a9;border-radius:17px;background:#fff"></div>
<div class="abs" style="left:2043.3px;top:83.3px;font-size:10.8px;line-height:12px;letter-spacing:0;color:#222;white-space:nowrap;transform:scaleX(.92);transform-origin:0 0">PRINT PAGE</div>

</div></div>
</body>
</html>
